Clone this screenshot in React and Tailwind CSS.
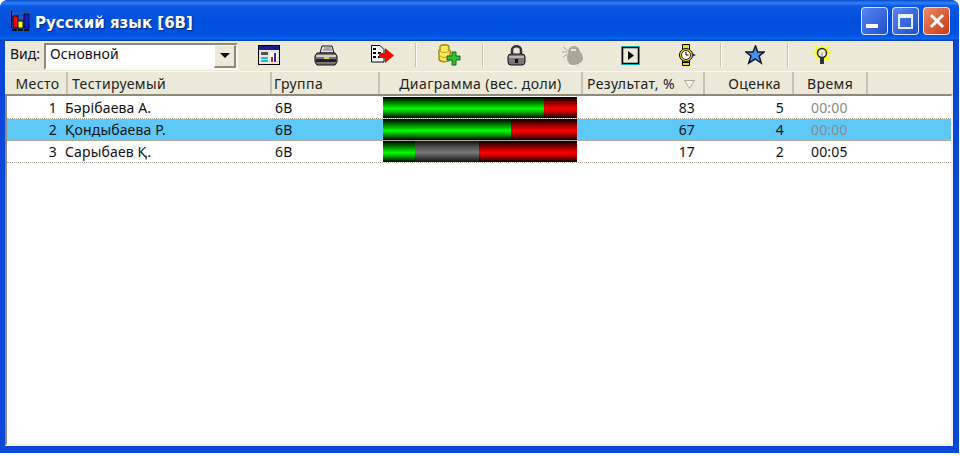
import React from "react";

const columns = [
  { title: "Место", width: "w-[59px]", align: "justify-center" },
  { title: "Тестируемый", width: "w-[204px]", align: "justify-start pl-[4px]" },
  { title: "Группа", width: "w-[108px]", align: "justify-start pl-[2px]" },
  { title: "Диаграмма (вес. доли)", width: "w-[203px]", align: "justify-center" },
  { title: "Результат, %", width: "w-[122px]", align: "justify-start pl-[4px]", sort: true },
  { title: "Оценка", width: "w-[89px]", align: "justify-end pr-[11px]" },
  { title: "Время", width: "w-[74px]", align: "justify-start pl-[13px]" },
];

const rows = [
  { place: 1, name: "Бәрібаева А.", group: "6В", bar: [161, 0, 33], result: 83, mark: 5, time: "00:00", dim: true },
  { place: 2, name: "Қондыбаева Р.", group: "6В", bar: [128, 0, 66], result: 67, mark: 4, time: "00:00", dim: true, selected: true },
  { place: 3, name: "Сарыбаев Қ.", group: "6В", bar: [32, 64, 98], result: 17, mark: 2, time: "00:05" },
];

const AppIcon = () => (
  <svg width="22" height="22" viewBox="0 0 22 22" className="shrink-0">
    <path d="M1 3h20M1 8h20M1 13h20" stroke="#7a6a30" strokeWidth="1" strokeDasharray="2 1" />
    <path d="M2.500 1v17" stroke="#000" strokeWidth="1" />
    <rect x="4" y="6" width="5" height="12" fill="#f00" stroke="#111" strokeWidth="1" />
    <rect x="9" y="11" width="5" height="7" fill="#ff0" stroke="#111" strokeWidth="1" />
    <rect x="15" y="4" width="5" height="14" fill="#0a1ee0" stroke="#111" strokeWidth="1" />
    <path d="M3 20h17" stroke="#111" strokeWidth="2" strokeDasharray="5 1" />
  </svg>
);

const ReportIcon = () => (
  <svg width="22" height="20" viewBox="0 0 22 20">
    <rect x="0.500" y="0.500" width="21" height="19" fill="#ece9d8" stroke="#000" />
    <rect x="1" y="1" width="20" height="4" fill="#1c1c90" />
    <rect x="3" y="7" width="7" height="3" fill="#555" />
    <rect x="3" y="12" width="7" height="2" fill="#22c0d8" />
    <rect x="3" y="15" width="7" height="2" fill="#22c0d8" />
    <rect x="12" y="7" width="7" height="10" fill="#fff" />
    <rect x="13" y="12" width="2" height="5" fill="#c02020" />
    <rect x="16" y="8" width="2" height="9" fill="#3030c0" />
  </svg>
);

const PrinterIcon = () => (
  <svg width="24" height="21" viewBox="0 0 24 21">
    <path d="M8 1h10l2 7H6z" fill="#e8e8e8" stroke="#111" />
    <path d="M10 3h7M9 5h9" stroke="#666" />
    <path d="M3 8h18l2 3v6l-2 3H3l-2-3v-6z" fill="#777" stroke="#111" />
    <rect x="2" y="10" width="20" height="2" fill="#d0d0d0" />
    <rect x="2" y="14" width="20" height="3" fill="#222" />
    <rect x="10" y="12" width="5" height="2" fill="#e8d820" />
  </svg>
);

const ExportIcon = () => (
  <svg width="23" height="20" viewBox="0 0 23 20">
    <path d="M0.500 0.500H9l4 4V17H0.500z" fill="#fff" stroke="#000" />
    <path d="M2 4h3M2 8h3M2 12h3M7 8h3M7 12h2" stroke="#000" strokeWidth="2" />
    <path d="M8 8h6V3l9 7.500-9 7.500v-5H8z" fill="#f00" />
  </svg>
);

const DbAddIcon = () => (
  <svg width="23" height="22" viewBox="0 0 23 22">
    <path d="M2 3c0-3 9-3 9 0v3c2 1 2 2 1 3v6c0 3-10 4-11 0V8c-1-1 0-2 1-2z" fill="#f8e858" stroke="#a88c18" strokeWidth="1.500" />
    <path d="M2 7c2 2 7 2 9 0M2 12c2 2 7 2 9 0" stroke="#b8a030" fill="none" />
    <path d="M14 8h4v4h4v4h-4v5h-4v-5H9v-4h5z" fill="#30c038" stroke="#0c6a18" />
  </svg>
);

const LockIcon = () => (
  <svg width="19" height="21" viewBox="0 0 19 21">
    <path d="M5 9V5c0-5 9-5 9 0v4" fill="none" stroke="#333" strokeWidth="2.500" />
    <rect x="1" y="9" width="17" height="11" rx="3" fill="#777" stroke="#111" />
    <rect x="2" y="11" width="15" height="2" fill="#b8b8b8" />
    <path d="M8 14h3v4H8z" fill="#111" />
  </svg>
);

const GhostLockIcon = () => (
  <svg width="23" height="21" viewBox="0 0 23 21">
    <path d="M1 2l5 4M0 7h5M1 12l5-3" stroke="#aca899" />
    <circle cx="12" cy="7" r="6" fill="#aca899" />
    <circle cx="13" cy="13" r="8" fill="#aca899" />
    <path d="M9 5h5" stroke="#ece9d8" strokeWidth="2" />
    <path d="M6 20c5 2 12 0 15-4" stroke="#fff" fill="none" />
  </svg>
);

const PlayIcon = () => (
  <svg width="19" height="19" viewBox="0 0 19 19">
    <rect width="19" height="19" fill="#00e8f0" />
    <rect x="1.500" y="1.500" width="16" height="16" fill="#ece9d8" stroke="#000" strokeWidth="1.500" />
    <path d="M7 5l6 4.500L7 14z" fill="#000" />
  </svg>
);

const WatchIcon = () => (
  <svg width="17" height="22" viewBox="0 0 17 22">
    <path d="M3.500 0.500h7v6h-7zM3.500 15.500h7v6h-7z" fill="#f4e000" stroke="#000" />
    <path d="M3.500 18.500h7" stroke="#000" />
    <circle cx="7" cy="11" r="6.500" fill="#f4e000" stroke="#000" />
    <circle cx="7" cy="11" r="4.500" fill="#fff" stroke="#222" />
    <path d="M7 8v3h2.500" stroke="#000" fill="none" />
    <path d="M13 9l4 2-4 2z" fill="#333" />
  </svg>
);

const StarIcon = () => (
  <svg width="20" height="20" viewBox="0 0 20 20">
    <path d="M10.500 1l2.300 6H19l-4.800 4 2 7-6-4-6.500 4 2.300-7L1 7h7z" fill="#4a90f0" stroke="#101828" strokeWidth="1.500" />
  </svg>
);

const BulbIcon = () => (
  <svg width="20" height="20" viewBox="0 0 20 20">
    <path d="M10 0v16M1 8h18M3 1l14 14M17 1L3 15" stroke="#ffff00" strokeWidth="2" />
    <circle cx="10" cy="8" r="6.500" fill="#ffff00" />
    <circle cx="10" cy="8" r="4.500" fill="#f4f0d0" stroke="#222" strokeWidth="1.500" />
    <path d="M8 13h4v6H8z" fill="#333" />
    <path d="M10 7v5" stroke="#999" />
  </svg>
);

const SortIcon = () => (
  <svg width="11" height="9" viewBox="0 0 11 9">
    <path d="M0.500 0.500h10L5.500 8.500z" fill="#f4f2e8" stroke="#aca899" />
  </svg>
);

const ToolButton = ({ children }) => (
  <div className="w-[57px] h-full flex items-center justify-center shrink-0">{children}</div>
);

const Separator = () => (
  <div className="w-[2px] h-[24px] mx-[4px] bg-[#c5c2b2] border-r border-white shrink-0" />
);

const CaptionButton = ({ gradient, children, mr = "mr-[4px]" }) => (
  <div className={`w-[27px] h-[28px] rounded-[4px] border border-white/80 flex items-center justify-center ${gradient} ${mr}`}>
    {children}
  </div>
);

const Bar = ({ parts }) => (
  <div className="w-[194px] h-[21px] flex ml-[8px]">
    <div style={{ width: parts[0] }} className="bg-[linear-gradient(to_bottom,#000_0%,#007000_25%,#00ff00_55%,#008000_80%,#000_100%)]" />
    {parts[1] > 0 && (
      <div style={{ width: parts[1] }} className="bg-[linear-gradient(to_bottom,#111_0%,#555_30%,#777_55%,#333_85%,#111_100%)]" />
    )}
    <div style={{ width: parts[2] }} className="bg-[linear-gradient(to_bottom,#000_0%,#800000_25%,#ff0000_55%,#900000_80%,#000_100%)]" />
  </div>
);

const Row = ({ row }) => (
  <div className={`h-[22px] flex items-start border-b border-dotted border-[#aca899] text-[14px] leading-[21px] tracking-[0.15px] text-[#111] ${row.selected ? "bg-[#5ec8f8]" : "bg-white"}`}>
    <div className="w-[50px] text-right">{row.place}</div>
    <div className="w-[210px] pl-[8px]">{row.name}</div>
    <div className="w-[108px] pl-[8px]">{row.group}</div>
    <div className="w-[203px]"><Bar parts={row.bar} /></div>
    <div className="w-[117px] text-right">{row.result}</div>
    <div className="w-[89px] text-right">{row.mark}</div>
    <div className={`w-[74px] pl-[27px] whitespace-nowrap ${row.dim ? "text-[#8a8a8a]" : ""}`}>{row.time}</div>
  </div>
);

export default function App() {
  return (
    <div className="w-[959px] h-[453px] flex flex-col font-['Noto_Sans',sans-serif] rounded-t-[8px] overflow-hidden bg-[#0a46d8]">
      {/* title bar */}
      <div className="h-[41px] shrink-0 flex items-center pl-[9px] pr-[9px] bg-[linear-gradient(to_bottom,#0a4cd0_0%,#2f80f4_7%,#0a58e4_15%,#004edc_55%,#0052e0_85%,#0a64f0_94%,#003ca8_100%)]">
        <AppIcon />
        <span className="ml-[4px] pt-[5px] text-white font-['DejaVu_Sans',sans-serif] font-bold text-[15px] [text-shadow:1px_1px_1px_#0a2a80]">Русский язык [6В]</span>
        <div className="ml-auto flex items-center pt-px">
          <CaptionButton gradient="bg-[linear-gradient(135deg,#5a86ee,#1e4ed0)]">
            <div className="w-[12px] h-[4px] bg-white mt-[10px] mr-[6px]" />
          </CaptionButton>
          <CaptionButton gradient="bg-[linear-gradient(135deg,#5a86ee,#1e4ed0)]">
            <div className="w-[15px] h-[15px] border-2 border-t-4 border-white/90" />
          </CaptionButton>
          <CaptionButton mr="mr-0" gradient="bg-[linear-gradient(135deg,#ec8a60,#c83a18)]">
            <svg width="16" height="16" viewBox="0 0 16 16">
              <path d="M2 2l12 12M14 2L2 14" stroke="#fff" strokeWidth="3" />
            </svg>
          </CaptionButton>
        </div>
      </div>

      {/* body inside the blue frame */}
      <div className="flex-1 min-h-0 ml-[5px] mr-[6px] mb-[7px] flex flex-col bg-[#ece9d8]">
        {/* toolbar */}
        <div className="h-[30px] shrink-0 flex items-center pb-[2px] text-[14px] text-[#111]">
          <span className="ml-[5px] w-[34px] pb-[3px]">Вид:</span>
          <div className="w-[194px] h-[27px] mt-[2px] flex items-center border-2 border-[#8d8a7c] border-r-[#f8f7f0] border-b-[#f8f7f0] bg-white">
            <span className="flex-1 pl-[4px] pb-[5px] tracking-[0.1px]">Основной</span>
            <div className="w-[22px] h-[23px] flex items-center justify-center bg-[#ece9d8] border-r-2 border-b-2 border-[#8d8a7c] border-t border-l border-t-white border-l-white">
              <div className="w-0 h-0 border-x-[5px] border-x-transparent border-t-[5px] border-t-black" />
            </div>
          </div>
          <div className="w-[2px] shrink-0" />
          <ToolButton><ReportIcon /></ToolButton>
          <ToolButton><PrinterIcon /></ToolButton>
          <ToolButton><ExportIcon /></ToolButton>
          <Separator />
          <ToolButton><DbAddIcon /></ToolButton>
          <Separator />
          <ToolButton><LockIcon /></ToolButton>
          <ToolButton><GhostLockIcon /></ToolButton>
          <ToolButton><PlayIcon /></ToolButton>
          <ToolButton><WatchIcon /></ToolButton>
          <Separator />
          <ToolButton><StarIcon /></ToolButton>
          <Separator />
          <ToolButton><BulbIcon /></ToolButton>
        </div>

        {/* column headers */}
        <div className="h-[23px] shrink-0 flex pl-[4px] border-t border-[#f8f7f0] text-[14px] tracking-[0.4px] text-[#222]">
          {columns.map((col) => (
            <div key={col.title} className={`h-full shrink-0 border-r-2 border-r-[#c5c2b2] flex items-center ${col.width} ${col.align}`}>
              <span>{col.title}</span>
              {col.sort && <span className="ml-[9px] mt-[2px]"><SortIcon /></span>}
            </div>
          ))}
        </div>

        {/* list */}
        <div className="flex-1 min-h-0 pt-px border-t-2 border-l-2 border-r-2 border-b-2 border-t-[#8d8a7c] border-l-[#8d8a7c] border-r-[#f4f2e6] border-b-[#f4f2e6] bg-white">
          {rows.map((row) => (
            <Row key={row.place} row={row} />
          ))}
        </div>
      </div>
    </div>
  );
}
